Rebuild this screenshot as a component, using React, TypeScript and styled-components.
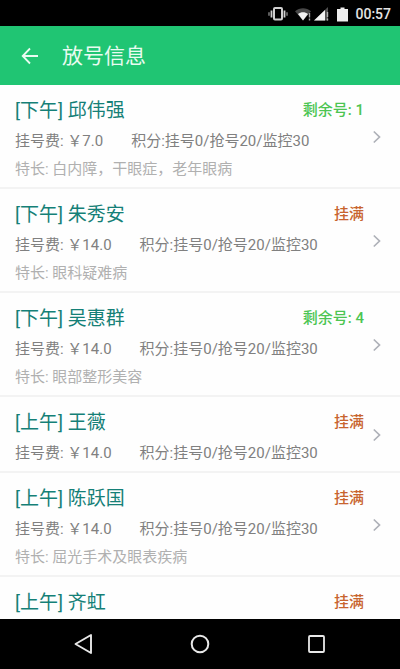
import React from 'react';
import styled, { createGlobalStyle } from 'styled-components';

const GlobalStyle = createGlobalStyle`
  * { box-sizing: border-box; }
  body {
    margin: 0;
    background: #000;
    font-family: Roboto, "Noto Sans CJK SC", sans-serif;
  }
`;

const Screen = styled.div`
  display: flex;
  flex-direction: column;
  height: 100vh;
  background: #fefefe;
`;

const StatusBar = styled.div`
  display: flex;
  flex: none;
  align-items: center;
  justify-content: flex-end;
  height: 26px;
  padding: 2px 9px 0 0;
  background: #000;
  color: #e4e4e4;
`;

const StatusIcon = styled.svg<{ $gap: number }>`
  display: block;
  flex: none;
  margin-right: ${(p) => p.$gap}px;
`;

const Clock = styled.time`
  font-size: 14px;
  font-weight: 500;
  line-height: 20px;
`;

const AppBar = styled.header`
  display: flex;
  flex: none;
  align-items: center;
  gap: 14px;
  height: 59px;
  padding: 0 12px;
  background: #20c573;
  color: #e9fbf1;
`;

const IconButton = styled.button`
  display: flex;
  align-items: center;
  justify-content: center;
  width: 36px;
  height: 36px;
  padding: 0;
  border: 0;
  background: none;
  color: inherit;
  cursor: pointer;
`;

const Title = styled.h1`
  margin: 0;
  font-size: 21px;
  font-weight: 400;
  line-height: 28px;
`;

const List = styled.ul`
  flex: 1;
  min-height: 0;
  margin: 0;
  padding: 0;
  overflow-y: auto;
  list-style: none;
  scrollbar-width: none;
`;

const Item = styled.li`
  border-bottom: 2px solid #f3f3f3;
`;

const RowLink = styled.a`
  display: flex;
  align-items: center;
  gap: 8px;
  padding: 12px 18px 4px 15px;
  color: #808080;
  text-decoration: none;
`;

const RowBody = styled.div`
  flex: 1;
  min-width: 0;
  font-size: 15px;
  line-height: 28px;
  white-space: nowrap;
`;

const RowHead = styled.div`
  display: flex;
  justify-content: space-between;
  margin-bottom: 2px;
`;

const Doctor = styled.span`
  color: #158077;
  font-size: 19px;
`;

const Remaining = styled.span<{ $open: boolean }>`
  color: ${(p) => (p.$open ? '#4cc552' : '#c8642f')};
  font-weight: 500;
  line-height: 26px;
`;

const Costs = styled.div`
  display: flex;
  gap: 28px;
`;

const Specialty = styled.div`
  color: #b0b0b0;
`;

const Chevron = styled.svg`
  flex: none;
  margin-bottom: 6px;
`;

const NavBar = styled.nav`
  display: flex;
  flex: none;
  align-items: center;
  justify-content: center;
  gap: 80px;
  height: 50px;
  background: #000;
  color: #e8e8e8;
`;

type Slot = {
  session: string;
  name: string;
  left: number;
  fee?: string;
  specialty?: string;
};

const slots: Slot[] = [
  { session: '下午', name: '邱伟强', fee: '7.0', left: 1, specialty: '白内障，干眼症，老年眼病' },
  { session: '下午', name: '朱秀安', fee: '14.0', left: 0, specialty: '眼科疑难病' },
  { session: '下午', name: '吴惠群', fee: '14.0', left: 4, specialty: '眼部整形美容' },
  { session: '上午', name: '王薇', fee: '14.0', left: 0 },
  { session: '上午', name: '陈跃国', fee: '14.0', left: 0, specialty: '屈光手术及眼表疾病' },
  { session: '上午', name: '齐虹', left: 0 },
];

function SlotRow({ slot }: { slot: Slot }) {
  return (
    <Item>
      <RowLink href="#">
        <RowBody>
          <RowHead>
            <Doctor>[{slot.session}] {slot.name}</Doctor>
            <Remaining $open={slot.left > 0}>
              {slot.left > 0 ? `剩余号: ${slot.left}` : '挂满'}
            </Remaining>
          </RowHead>
          {slot.fee && (
            <Costs>
              <span>挂号费: ￥{slot.fee}</span>
              <span>积分:挂号0/抢号20/监控30</span>
            </Costs>
          )}
          {slot.specialty && <Specialty>特长: {slot.specialty}</Specialty>}
        </RowBody>
        <Chevron width="10" height="14" viewBox="0 0 10 14" fill="none" stroke="#aeb1b8" strokeWidth="1.7" aria-hidden="true">
          {slot.fee && <path d="M1.8 1.5 7.5 7l-5.7 5.5" />}
        </Chevron>
      </RowLink>
    </Item>
  );
}

export default function App() {
  return (
    <>
      <GlobalStyle />
      <Screen>
        <StatusBar>
          <StatusIcon $gap={7} width="20" height="16" viewBox="0 0 20 16" fill="none" stroke="#cfcfcf" aria-hidden="true">
            <rect x="6" y="2" width="8" height="11.5" rx="1" strokeWidth="2" />
            <path d="M3.5 4.5v7M16.5 4.5v7" strokeWidth="1.8" />
            <path d="M1 6.3v3.4M19 6.3v3.4" strokeWidth="1.3" stroke="#909090" />
          </StatusIcon>
          <StatusIcon $gap={3} width="16" height="14" viewBox="0 0 16 14" aria-hidden="true">
            <path d="M0 4.2C4.5.2 11.5.2 16 4.2L8 13.5Z" fill="#484848" />
            <path d="M3 7c3-2.2 7-2.2 10 0l-5 6.5Z" fill="#f2f2f2" />
            <path d="M14.5 6v4.5M14.5 11.5v2" stroke="#a0a0a0" strokeWidth="1.4" />
          </StatusIcon>
          <StatusIcon $gap={8} width="15" height="14" viewBox="0 0 15 14" aria-hidden="true">
            <path d="M14 0v13.5H0Z" fill="#505050" />
            <path d="M11 3v10.5H0Z" fill="#f2f2f2" />
            <path d="M13.5 5v5M13.5 11.5v2" stroke="#b0b0b0" strokeWidth="1.4" />
          </StatusIcon>
          <StatusIcon $gap={7} width="11" height="15" viewBox="0 0 11 15" fill="#eeeeee" aria-hidden="true">
            <path d="M3.5.5h4v1.5H11v12.5H0V2h3.5Z" />
          </StatusIcon>
          <Clock>00:57</Clock>
        </StatusBar>
        <AppBar>
          <IconButton type="button" aria-label="返回">
            <svg width="18" height="18" viewBox="0 0 18 18" fill="none" stroke="currentColor" strokeWidth="1.8" aria-hidden="true">
              <path d="M17 9H2M9 1.5 1.7 9 9 16.5" />
            </svg>
          </IconButton>
          <Title>放号信息</Title>
        </AppBar>
        <List>
          {slots.map((slot) => (
            <SlotRow key={slot.name} slot={slot} />
          ))}
        </List>
        <NavBar>
          <IconButton type="button" aria-label="后退">
            <svg width="20" height="22" viewBox="0 0 20 22" fill="none" stroke="currentColor" strokeWidth="1.9" strokeLinejoin="round" aria-hidden="true">
              <path d="M17 2v18L1.5 11Z" />
            </svg>
          </IconButton>
          <IconButton type="button" aria-label="主屏幕">
            <svg width="20" height="20" viewBox="0 0 20 20" fill="none" stroke="currentColor" strokeWidth="2" aria-hidden="true">
              <circle cx="10" cy="10" r="8.3" />
            </svg>
          </IconButton>
          <IconButton type="button" aria-label="最近任务">
            <svg width="20" height="20" viewBox="0 0 20 20" fill="none" stroke="currentColor" strokeWidth="1.8" aria-hidden="true">
              <rect x="3" y="2" width="15" height="16" rx="1" />
            </svg>
          </IconButton>
        </NavBar>
      </Screen>
    </>
  );
}
